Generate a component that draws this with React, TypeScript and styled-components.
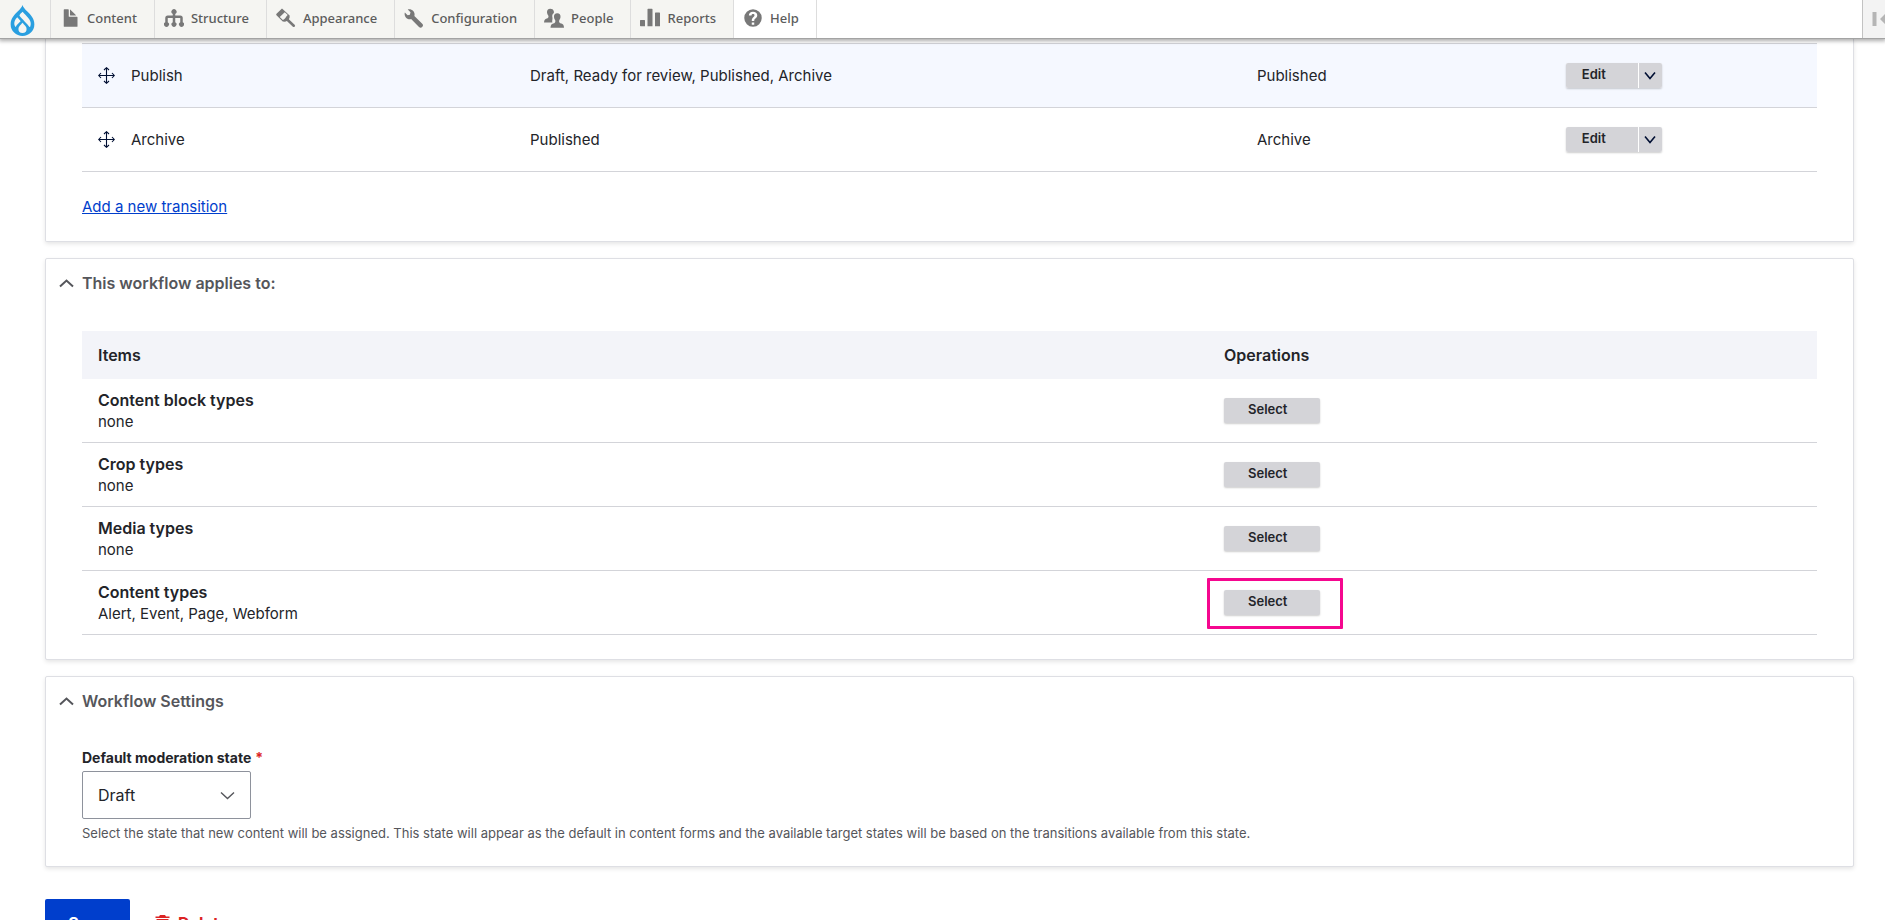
import React from 'react';
import styled, { createGlobalStyle, css } from 'styled-components';
import { SiDrupal } from 'react-icons/si';

const ink = '#232429';
const sans = `Inter, "Liberation Sans", sans-serif`;

const GlobalStyle = createGlobalStyle`
  *, *::before, *::after { box-sizing: border-box; }
  html { scrollbar-width: none; }
  body {
    margin: 0;
    background: #fff;
    color: ${ink};
    font: 15px/21px ${sans};
  }
`;

/* ---------- Toolbar ---------- */

const Toolbar = styled.nav`
  position: relative;
  z-index: 1;
  display: flex;
  height: 39px;
  background: #fff;
  border-bottom: 1px solid #a3a3a3;
  box-shadow: 0 1px 4px 1px rgba(0, 0, 0, 0.33);
`;

const HomeTab = styled.a`
  display: flex;
  align-items: center;
  justify-content: center;
  width: 51px;
  padding: 2px 6px 0 0;
  background: #f5f5f2;
  border-right: 1px solid #ddd;
  color: #2a9fe0;
`;

const Tab = styled.a<{ $active?: boolean }>`
  display: flex;
  align-items: center;
  gap: 7px;
  padding: 0 17px 2px 9px;
  background: ${(p) => (p.$active ? '#fff' : '#f5f5f2')};
  border-right: 1px solid #ddd;
  color: #5c5c5c;
  font: 500 13px/18px "Noto Sans", sans-serif;
  text-decoration: none;

  svg {
    flex: none;
    fill: #787878;
  }
`;

const OrientationToggle = styled.button`
  display: flex;
  align-items: center;
  width: 23px;
  margin-left: auto;
  padding: 0 0 0 9px;
  overflow: hidden;
  background: #f3f3f3;
  border: 0;
  border-left: 1px solid #c2c2c2;

  svg {
    flex: none;
    fill: #b5b5b5;
  }
`;

/* ---------- Page ---------- */

const Page = styled.main`
  display: flex;
  flex-direction: column;
  gap: 16px;
  padding: 0 31px 24px 45px;
`;

const Panel = styled.section<{ $continued?: boolean }>`
  padding: 0 36px 24px;
  background: #fff;
  border: 1px solid #dedfe4;
  border-radius: 2px;
  box-shadow: 0 2px 4px rgba(0, 0, 0, 0.1);

  ${(p) =>
    p.$continued &&
    css`
      padding-top: 4px;
      border-top: 0;
      border-radius: 0 0 2px 2px;
    `}
`;

const PanelTitle = styled.h2`
  display: flex;
  align-items: center;
  gap: 8px;
  margin: 0 0 24px -23px;
  padding: 12px 0;
  color: #55565b;
  font-size: 16px;
  font-weight: 600;
  line-height: 24px;
`;

const Table = styled.table<{ $ruled?: boolean }>`
  width: 100%;
  table-layout: fixed;
  border-collapse: separate;
  border-spacing: 0;
  border-top: ${(p) => (p.$ruled ? '1px solid #d3d4d9' : '0')};
`;

const Col = styled.col<{ $share: number }>`
  width: ${(p) => p.$share}%;
`;

const HeadCell = styled.th`
  height: 48px;
  padding: 0 16px;
  background: #f3f4f9;
  font-size: 16px;
  font-weight: 600;
  text-align: left;
`;

const Row = styled.tr<{ $tinted?: boolean }>`
  background: ${(p) => (p.$tinted ? '#f5f8ff' : 'transparent')};
`;

const Cell = styled.td`
  height: 64px;
  padding: 0 16px;
  border-bottom: 1px solid #d3d4d9;
`;

const DragLabel = styled.div`
  display: flex;
  align-items: center;
  gap: 16px;
`;

const ItemTitle = styled.strong`
  display: block;
  font-size: 16px;
  font-weight: 600;
`;

const AddLink = styled.a`
  display: inline-block;
  margin-top: 24px;
  color: #003ecc;
`;

/* ---------- Buttons ---------- */

const smallButton = css`
  height: 25px;
  border: 0;
  background: #d4d4d8;
  color: ${ink};
  font: 600 13px/23px ${sans};
  text-align: left;
`;

const SelectButton = styled.button`
  ${smallButton}
  display: block;
  width: 96px;
  padding: 0 24px 2px;
  border-radius: 2px;
  box-shadow: 0 1px 2px rgba(0, 0, 0, 0.2);
`;

const Dropbutton = styled.div`
  display: flex;
  gap: 1px;
  width: 96px;
  background: #fff;
  border-radius: 2px;
  box-shadow: 0 1px 2px rgba(0, 0, 0, 0.2);
`;

const EditButton = styled.button`
  ${smallButton}
  width: 72px;
  padding: 0 16px 2px;
  border-radius: 2px 0 0 2px;
`;

const ToggleButton = styled.button`
  ${smallButton}
  display: flex;
  align-items: center;
  justify-content: center;
  width: 23px;
  padding: 0;
  border-radius: 0 2px 2px 0;
`;

const Anchor = styled.div`
  position: relative;
  width: 96px;
`;

const Highlight = styled.span`
  position: absolute;
  inset: -12px -23px -14px -17px;
  border: 3px solid #f5078f;
  border-radius: 1px;
  pointer-events: none;
`;

/* ---------- Form ---------- */

const Field = styled.div`
  display: flex;
  flex-direction: column;
  align-items: flex-start;
`;

const Label = styled.label`
  margin-bottom: 4px;
  font-size: 14px;
  font-weight: 700;
  line-height: 18px;
`;

const Required = styled.span`
  margin-left: 4px;
  color: #dc2323;
`;

const SelectWrap = styled.div`
  position: relative;
  width: 169px;

  svg {
    position: absolute;
    top: 20px;
    right: 16px;
    pointer-events: none;
  }
`;

const Select = styled.select`
  display: block;
  width: 100%;
  height: 48px;
  padding: 0 48px 0 15px;
  appearance: none;
  background: #fff;
  border: 1px solid #8e929c;
  border-radius: 2px;
  color: ${ink};
  font: 16px/24px ${sans};
`;

const Help = styled.p`
  margin: 6px 0 0;
  color: #55565b;
  font-size: 13px;
  line-height: 17px;
`;

const Actions = styled.div`
  display: flex;
  align-items: center;
  gap: 25px;
  margin-top: 16px;
`;

const SaveButton = styled.button`
  width: 85px;
  height: 48px;
  padding: 0;
  background: #003ecc;
  border: 0;
  border-radius: 2px;
  color: #fff;
  font: 700 16px/16px ${sans};
`;

const DeleteLink = styled.a`
  display: flex;
  align-items: center;
  gap: 8px;
  color: #dc2323;
  font-weight: 700;
  font-size: 16px;
  text-decoration: none;
`;

/* ---------- Icons ---------- */

const tabIcons: Record<string, React.ReactNode> = {
  Content: (
    <>
      <path d="M12.500 7h-5a.5.5 0 0 1-.5-.5v-5a.5.5 0 0 0-.5-.5h-3a.5.5 0 0 0-.5.5v13a.5.5 0 0 0 .5.5h10a.5.5 0 0 0 .5-.5v-7a.5.5 0 0 0-.5-.5z" />
      <path d="M8.500 6h4c.3 0 .35-.16.15-.35L8.350 1.350C8.160 1.160 8 1.200 8 1.500v4a.5.5 0 0 0 .5.5z" />
    </>
  ),
  Structure: (
    <path d="M15 11.300V8a2 2 0 0 0-2-2H9V4.700a2 2 0 1 0-2 0V6H3a2 2 0 0 0-2 2v3.300a2 2 0 1 0 2 0V8h4v3.300a2 2 0 1 0 2 0V8h4v3.300a2 2 0 1 0 2 0z" />
  ),
  Appearance: (
    <path
      fillRule="evenodd"
      d="M.2 4.800L4.800.4L10.900 5.900V7.500L10.300 8.900L14.900 13.300A1 1 0 0 1 13.500 14.900L8.700 10.300L7.200 11L5.400 10.800L.2 5.600ZM7 3.300L3 7.200L5.500 9.600C6.500 8.900 7.500 8.200 7.900 7.300C8.100 6.600 8.700 6.200 9.400 5.500Z"
    />
  ),
  Configuration: (
    <path d="M14.600 12.600L8.300 6.300C8.700 5 8.400 3.500 7.400 2.400C6.300 1.200 4.500 0.800 3 1.200L5.200 3.400L4.700 5.300L2.900 5.800L0.700 3.600C0.200 5.100 0.600 6.700 1.800 7.900C2.900 8.900 4.400 9.200 5.700 8.800L12 15.100A1.750 1.750 0 0 0 14.600 12.600Z" />
  ),
  People: (
    <>
      <path d="M6.700 11.500C6.300 10.400 6.900 9.200 6.800 8C6.500 6.500 6.300 5 7.900 4V2.700C7.600 1.200 6.300 .6 5 .6C3.200 .6 2.300 1.800 2.400 3.500C2.500 4.600 2.900 5.400 3.400 5.900C4 7.400 3.200 8 2.200 8.300C.8 8.700.2 9.300 0 11.500Z" />
      <path d="M10.600 4.200C12.400 4.200 13.400 5.400 13.200 7.200C13.100 8.300 12.700 9.200 12.200 9.700C11.700 11.500 12.600 12 13.900 12.400C15.200 12.800 15.900 13.500 16 15.800H5.200C5.300 13.500 6 12.800 7.300 12.400C8.600 12 9.400 11.500 9 9.700C8.400 9.200 8.100 8.300 8 7.200C7.800 5.400 8.800 4.200 10.600 4.200Z" />
    </>
  ),
  Reports: (
    <path d="M.5 9.500h3a.5.5 0 0 1 .5.5v4.500H.5A.5.5 0 0 1 0 14v-4a.5.5 0 0 1 .5-.5zM6.500.5h3a.5.5 0 0 1 .5.5v13.500H6V1a.5.5 0 0 1 .5-.5zM12.500 3.500h3a.5.5 0 0 1 .5.5v10.500h-4V4a.5.5 0 0 1 .5-.5z" />
  ),
  Help: (
    <path
      fillRule="evenodd"
      d="M8 1a7 7 0 1 0 0 14A7 7 0 0 0 8 1zM7 11.500h2v1.800H7zM4.700 6C4.700 4 6 2.900 8 2.900S11.400 4 11.400 5.800C11.400 7.200 10.600 7.800 9.900 8.400C9.200 8.900 9 9.300 9 10.300H7C7 8.700 7.400 8.100 8.200 7.400C8.900 6.800 9.200 6.500 9.200 5.800C9.200 5.200 8.800 4.800 8 4.800S6.800 5.200 6.800 6Z"
    />
  ),
};

const TabIcon = ({ name }: { name: string }) => (
  <svg width="20" height="20" viewBox="0 0 16 16" aria-hidden="true">
    {tabIcons[name]}
  </svg>
);

const MoveIcon = () => (
  <svg width="17" height="17" viewBox="0 0 17 17" fill="none" stroke="#000f33" strokeWidth="1.1" aria-hidden="true">
    <path d="M8.500 1V16M1 8.500H16" />
    <path d="M6 3L8.500 .7L11 3M6 14L8.500 16.300L11 14M3 6L.7 8.500L3 11M14 6L16.300 8.500L14 11" />
  </svg>
);

const Chevron = ({ up, width, color, weight }: { up?: boolean; width: number; color: string; weight: number }) => (
  <svg width={width} height="9" viewBox={`0 0 ${width} 9`} fill="none" stroke={color} strokeWidth={weight} aria-hidden="true">
    <path d={up ? `M1 7.500L${width / 2} 1.500L${width - 1} 7.500` : `M1 1.500L${width / 2} 7.500L${width - 1} 1.500`} />
  </svg>
);

const ToggleIcon = () => (
  <svg width="20" height="16" viewBox="0 0 20 16" aria-hidden="true">
    <path d="M0.500 1h4v14h-4zM8 8l6-6v4h6v4h-6v4z" />
  </svg>
);

const TrashIcon = () => (
  <svg width="15" height="18" viewBox="0 0 15 18" fill="#dc2323" aria-hidden="true">
    <path d="M0.500 2.500H4L5 1H10L11 2.500H14.500V4H0.500Z" />
    <path fillRule="evenodd" d="M1.500 5H13.500L12.700 17H2.300ZM4.500 7L5 15H6L5.700 7ZM9.300 7L9 15H10L10.500 7Z" />
  </svg>
);

/* ---------- Content ---------- */

const tabs = ['Content', 'Structure', 'Appearance', 'Configuration', 'People', 'Reports', 'Help'];

const transitions = [
  { label: 'Publish', from: 'Draft, Ready for review, Published, Archive', to: 'Published' },
  { label: 'Archive', from: 'Published', to: 'Archive' },
];

const entityTypes = [
  { title: 'Content block types', selected: 'none' },
  { title: 'Crop types', selected: 'none' },
  { title: 'Media types', selected: 'none' },
  { title: 'Content types', selected: 'Alert, Event, Page, Webform', highlighted: true },
];

export default function App() {
  return (
    <>
      <GlobalStyle />
      <Toolbar>
        <HomeTab href="#" aria-label="Home">
          <SiDrupal size={31} aria-hidden="true" />
        </HomeTab>
        {tabs.map((name) => (
          <Tab key={name} href="#" $active={name === 'Help'}>
            <TabIcon name={name} />
            {name}
          </Tab>
        ))}
        <OrientationToggle type="button" aria-label="Vertical orientation">
          <ToggleIcon />
        </OrientationToggle>
      </Toolbar>

      <Page>
        <Panel $continued>
          <Table $ruled>
            <colgroup>
              <Col $share={24.9} />
              <Col $share={41.9} />
              <Col $share={17.8} />
              <Col $share={15.4} />
            </colgroup>
            <tbody>
              {transitions.map((t, i) => (
                <Row key={t.label} $tinted={i === 0}>
                  <Cell>
                    <DragLabel>
                      <MoveIcon />
                      {t.label}
                    </DragLabel>
                  </Cell>
                  <Cell>{t.from}</Cell>
                  <Cell>{t.to}</Cell>
                  <Cell>
                    <Dropbutton>
                      <EditButton type="button">Edit</EditButton>
                      <ToggleButton type="button" aria-label="List additional actions">
                        <Chevron width={12} color="#000f33" weight={1.6} />
                      </ToggleButton>
                    </Dropbutton>
                  </Cell>
                </Row>
              ))}
            </tbody>
          </Table>
          <AddLink href="#">Add a new transition</AddLink>
        </Panel>

        <Panel>
          <PanelTitle>
            <Chevron up width={15} color="#55565b" weight={2} />
            This workflow applies to:
          </PanelTitle>
          <Table>
            <colgroup>
              <Col $share={64.9} />
              <Col $share={35.1} />
            </colgroup>
            <thead>
              <tr>
                <HeadCell>Items</HeadCell>
                <HeadCell>Operations</HeadCell>
              </tr>
            </thead>
            <tbody>
              {entityTypes.map((e) => (
                <Row key={e.title}>
                  <Cell>
                    <ItemTitle>{e.title}</ItemTitle>
                    {e.selected}
                  </Cell>
                  <Cell>
                    <Anchor>
                      <SelectButton type="button">Select</SelectButton>
                      {e.highlighted && <Highlight />}
                    </Anchor>
                  </Cell>
                </Row>
              ))}
            </tbody>
          </Table>
        </Panel>

        <Panel>
          <PanelTitle>
            <Chevron up width={15} color="#55565b" weight={2} />
            Workflow Settings
          </PanelTitle>
          <Field>
            <Label htmlFor="default-state">
              Default moderation state<Required>*</Required>
            </Label>
            <SelectWrap>
              <Select id="default-state" defaultValue="Draft">
                <option>Draft</option>
              </Select>
              <Chevron width={15} color="#55565b" weight={1.4} />
            </SelectWrap>
            <Help>
              Select the state that new content will be assigned. This state will appear as the default in content
              forms and the available target states will be based on the transitions available from this state.
            </Help>
          </Field>
        </Panel>

        <Actions>
          <SaveButton type="submit">Save</SaveButton>
          <DeleteLink href="#">
            <TrashIcon />
            Delete
          </DeleteLink>
        </Actions>
      </Page>
    </>
  );
}
